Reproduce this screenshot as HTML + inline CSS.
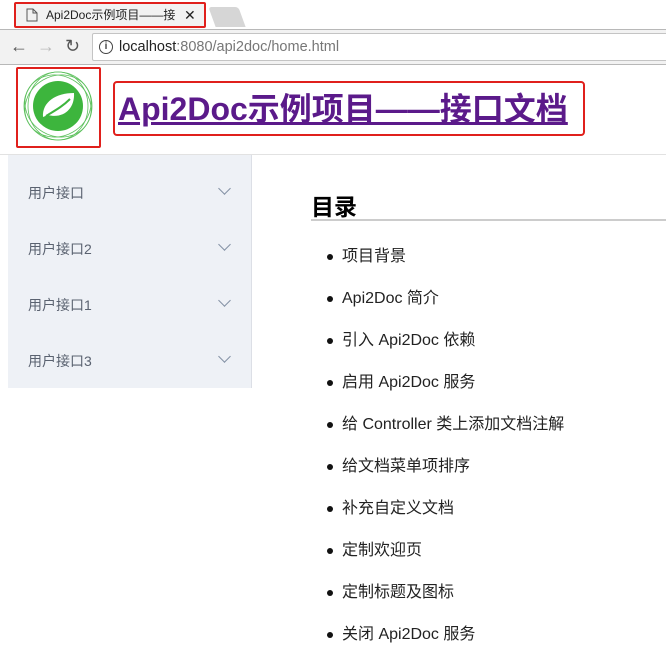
<!DOCTYPE html>
<html><head><meta charset="utf-8"><style>
*{margin:0;padding:0;box-sizing:border-box}
body{width:666px;height:672px;overflow:hidden;background:#fff;font-family:"Liberation Sans","Noto Sans CJK SC",sans-serif;position:relative}
.abs{position:absolute}
#tabbar{left:0;top:0;width:666px;height:29px;background:#fff}
#tab{left:14px;top:2px;width:192px;height:26px;background:#f2f2f2;border:2px solid #e0201c;border-radius:2px;font-size:12px;color:#222;line-height:22px;padding-left:30px;white-space:nowrap;overflow:hidden}
#toolbar{left:0;top:29px;width:666px;height:36px;background:#f2f2f2;border-top:1px solid #b8b8b8;border-bottom:1px solid #b8b8b8}
#url{left:92px;top:33px;width:580px;height:28px;background:#fff;border:1px solid #c4c4c4;border-radius:2px;font-size:14.5px;line-height:26px;padding-left:26px;color:#777}
#logo{left:16px;top:67px;width:85px;height:81px;border:2px solid #e0201c;border-radius:2px}
#title{left:113px;top:81px;width:472px;height:55px;border:2px solid #e0201c;border-radius:4px;font-size:32px;font-weight:bold;color:#5b1a8a;text-decoration:underline;line-height:52px;padding-left:3px;white-space:nowrap;overflow:hidden}
#hr1{left:0;top:154px;width:666px;height:1px;background:#e2e2e2}
#side{left:8px;top:155px;width:244px;height:233px;background:#eef1f6;border-right:1px solid #dcdfe6}
.mi{position:absolute;left:20px;top:0;font-size:14px;color:#5a6270;line-height:20px}
.ch{position:absolute;left:212px;width:9px;height:9px;border-right:1.5px solid #8391a5;border-bottom:1.5px solid #8391a5;transform:rotate(45deg)}
#h{left:311px;top:192px;font-size:23px;font-weight:bold;color:#000;line-height:30px}
#hr2{left:311px;top:219px;width:355px;height:2px;background:#ccc}
ul{position:absolute;left:342px;top:246px;list-style:none}
li{font-size:16px;color:#222;height:42px;line-height:22px;position:relative;white-space:nowrap}
li:before{content:"";position:absolute;left:-15px;top:8px;width:6px;height:6px;border-radius:50%;background:#111}
</style></head><body>
<div class="abs" id="tabbar"></div>
<div class="abs" style="left:212px;top:7px;width:30px;height:20px;background:#d6d6d6;transform:skewX(20deg);border-radius:3px 3px 0 0"></div>
<div class="abs" id="tab">Api2Doc示例项目——接<span style="position:absolute;left:168px;top:0;font-size:14px">✕</span>
<svg style="position:absolute;left:10px;top:4px" width="12" height="14"><path d="M1 1h6l4 4v8H1z M7 1v4h4" fill="none" stroke="#555"/></svg></div>
<div class="abs" id="toolbar"></div>
<div class="abs" style="left:10px;top:36px;font-size:18px;color:#555">←</div>
<div class="abs" style="left:37px;top:36px;font-size:18px;color:#bbb">→</div>
<div class="abs" style="left:65px;top:36px;font-size:18px;color:#555">↻</div>
<div class="abs" id="url"><span style="color:#222">localhost</span>:8080/api2doc/home.html
<span style="position:absolute;left:6px;top:6px;width:14px;height:14px;border:1.5px solid #444;border-radius:50%;font-size:10px;line-height:11px;text-align:center;color:#444;font-weight:bold">i</span></div>
<div class="abs" id="logo">
<svg width="81" height="77" viewBox="0 0 81 77"><g fill="none" stroke="#5cc05c" stroke-width="0.8">
<circle cx="40" cy="37" r="34"/><ellipse cx="40" cy="37" rx="34" ry="30" transform="rotate(30 40 37)"/><ellipse cx="40" cy="37" rx="34" ry="30" transform="rotate(-30 40 37)"/><ellipse cx="40" cy="37" rx="34" ry="30" transform="rotate(90 40 37)"/></g>
<circle cx="40" cy="37" r="25" fill="#3db53d"/>
<path d="M25 48 C24 33 38 24 56 24 C57 40 45 50 30 46 Z" fill="#fff"/>
<path d="M28 47 C36 42 44 38 52 30" stroke="#3db53d" stroke-width="2" fill="none"/></svg></div>
<div class="abs" id="title">Api2Doc示例项目——接口文档</div>
<div class="abs" id="hr1"></div>
<div class="abs" id="side">
<div class="mi" style="top:28px">用户接口</div><div class="ch" style="top:29px"></div>
<div class="mi" style="top:84px">用户接口2</div><div class="ch" style="top:85px"></div>
<div class="mi" style="top:140px">用户接口1</div><div class="ch" style="top:141px"></div>
<div class="mi" style="top:196px">用户接口3</div><div class="ch" style="top:197px"></div>
</div>
<div class="abs" id="hr2"></div>
<div class="abs" id="h">目录</div>
<ul>
<li>项目背景</li><li>Api2Doc 简介</li><li>引入 Api2Doc 依赖</li><li>启用 Api2Doc 服务</li><li>给 Controller 类上添加文档注解</li><li>给文档菜单项排序</li><li>补充自定义文档</li><li>定制欢迎页</li><li>定制标题及图标</li><li>关闭 Api2Doc 服务</li>
</ul>
</body></html>
